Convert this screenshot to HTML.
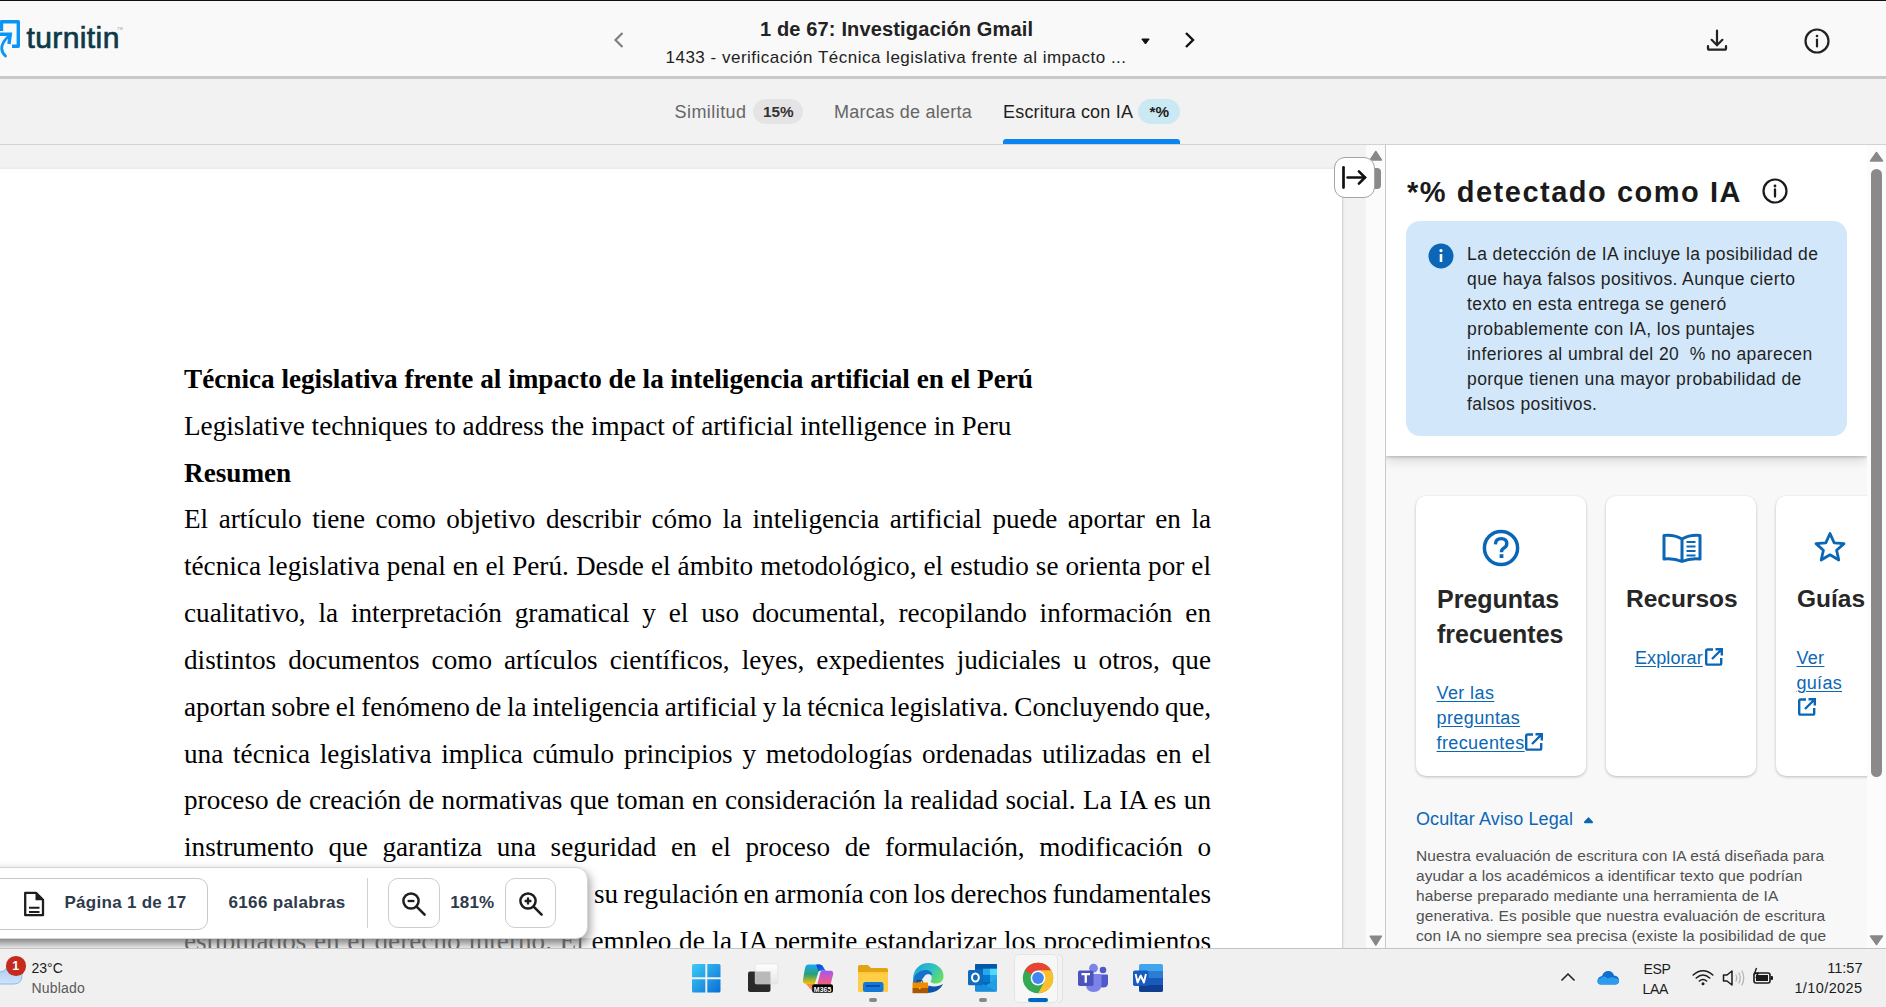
<!DOCTYPE html>
<html><head><meta charset="utf-8">
<style>
*{box-sizing:border-box;margin:0;padding:0}
html,body{width:1886px;height:1007px;overflow:hidden;background:#f2f2f2;font-family:"Liberation Sans",sans-serif;color:#222}
.a{position:absolute}
.nw{white-space:nowrap}
#topline{left:0;top:0;width:1886px;height:1px;background:#111}
#header{left:0;top:1px;width:1886px;height:75px;background:#f9f9f9}
#hborder{left:0;top:76px;width:1886px;height:3px;background:#c9c9c9}
#tabbar{left:0;top:79px;width:1886px;height:65px;background:#f2f2f2}
#tabborder{left:0;top:144px;width:1886px;height:1px;background:#d2d2d2}
#docgray{left:0;top:145px;width:1366px;height:803px;background:#f2f2f2}
#page{left:0;top:169px;width:1342px;height:779px;background:#fff}
#pagetop{left:0;top:166px;width:1342px;height:3px;background:linear-gradient(180deg,#f2f2f2,#e9e9e9)}
#pageshadow{left:1342px;top:169px;width:3px;height:779px;background:linear-gradient(90deg,#cdcdcd,#ececec 60%,#f2f2f2)}
#dscroll{left:1366px;top:145px;width:19px;height:803px;background:#fbfbfb}
#vline{left:1385px;top:145px;width:1px;height:803px;background:#c8c8c8}
#panel{left:1386px;top:145px;width:481px;height:803px;background:#f8f8f8;overflow:hidden}
#pscroll{left:1867px;top:145px;width:19px;height:803px;background:#fcfcfc}
#taskbar{left:0;top:948px;width:1886px;height:59px;background:#f0f0f0}
#tbborder{left:0;top:948px;width:1886px;height:1px;background:#c4c4c4}
.doc{font-family:"Liberation Serif",serif;font-size:27.2px;color:#000;left:184px;width:1027px;height:47px;line-height:47px;white-space:nowrap}
.j{text-align:justify;text-align-last:justify;white-space:normal}
</style></head><body>
<div id="topline" class="a"></div>
<div id="header" class="a"></div>
<div id="hborder" class="a"></div>
<div id="tabbar" class="a"></div>
<div id="tabborder" class="a"></div>
<div id="docgray" class="a"></div>
<div id="page" class="a"></div>
<div id="pagetop" class="a"></div>
<div id="pageshadow" class="a"></div>
<div id="dscroll" class="a"></div>
<div id="vline" class="a"></div>
<div id="panel" class="a"></div>
<div id="pscroll" class="a"></div>

<!-- document text -->
<div class="a doc" style="top:355.8px;font-weight:bold">Técnica legislativa frente al impacto de la inteligencia artificial en el Perú</div>
<div class="a doc" style="top:402.65px">Legislative techniques to address the impact of artificial intelligence in Peru</div>
<div class="a doc" style="top:449.5px;font-weight:bold">Resumen</div>
<div class="a doc" style="word-spacing:3.684px;top:496.35px">El artículo tiene como objetivo describir cómo la inteligencia artificial puede aportar en la</div>
<div class="a doc" style="word-spacing:0.268px;top:543.2px">técnica legislativa penal en el Perú. Desde el ámbito metodológico, el estudio se orienta por el</div>
<div class="a doc" style="word-spacing:6.069px;top:590.05px">cualitativo, la interpretación gramatical y el uso documental, recopilando información en</div>
<div class="a doc" style="word-spacing:5.223px;top:636.9px">distintos documentos como artículos científicos, leyes, expedientes judiciales u otros, que</div>
<div class="a doc" style="word-spacing:-1.079px;top:683.75px">aportan sobre el fenómeno de la inteligencia artificial y la técnica legislativa. Concluyendo que,</div>
<div class="a doc" style="word-spacing:2.972px;top:730.6px">una técnica legislativa implica cúmulo principios y metodologías ordenadas utilizadas en el</div>
<div class="a doc" style="word-spacing:0.625px;top:777.45px">proceso de creación de normativas que toman en consideración la realidad social. La IA es un</div>
<div class="a doc" style="word-spacing:7.848px;top:824.3px">instrumento que garantiza una seguridad en el proceso de formulación, modificación o</div>
<div class="a doc" style="word-spacing:-1.48px;top:871.15px;left:594px;width:617px">su regulación en armonía con los derechos fundamentales</div>
<div class="a" style="left:0;top:900px;width:1342px;height:48px;overflow:hidden">
<div class="a doc" style="word-spacing:0.833px;top:18.0px">estipulados en el derecho interno. El empleo de la IA permite estandarizar los procedimientos</div>
</div>

<!-- header -->
<svg class="a" style="left:0;top:18px" width="24" height="42" viewBox="0 0 24 42">
 <path d="M1.5 13 V3.7 H18.3 V28.3 H12" fill="none" stroke="#0a94f5" stroke-width="3.4" stroke-linejoin="round"/>
 <path d="M9.5 17.5 C3 23 -2 31 5.5 38" fill="none" stroke="#0a94f5" stroke-width="2.8" stroke-linecap="round"/>
 <path d="M0 16.2 H10.3 L9 26" fill="none" stroke="#0a94f5" stroke-width="3.4" stroke-linejoin="miter"/>
</svg>
<div class="a nw" style="left:26.5px;top:18px;font-size:30px;line-height:40px;letter-spacing:0.4px;color:#0c3a49;-webkit-text-stroke:0.7px #0c3a49">turnitin</div>
<div class="a nw" style="left:117px;top:26px;font-size:4px;line-height:5px;color:#8aa">TM</div>

<svg class="a" style="left:612px;top:31px" width="14" height="18" viewBox="0 0 14 18"><path d="M10.5 2 L3.5 9 L10.5 16" fill="none" stroke="#808080" stroke-width="2.2"/></svg>
<div class="a nw" style="left:760px;top:19px;font-size:20px;line-height:20px;font-weight:bold;letter-spacing:0.15px;color:#222">1 de 67: Investigación Gmail</div>
<div class="a nw" style="left:665.5px;top:47.7px;font-size:17px;line-height:20px;letter-spacing:0.5px;color:#222">1433 - verificación Técnica legislativa frente al impacto ...</div>
<svg class="a" style="left:1141px;top:38px" width="9" height="7" viewBox="0 0 9 7"><path d="M0.8 1 H8.2 L4.5 6 Z" fill="#111" stroke="#111" stroke-width="1" stroke-linejoin="round"/></svg>
<svg class="a" style="left:1182px;top:31px" width="14" height="18" viewBox="0 0 14 18"><path d="M4 2 L11 9 L4 16" fill="none" stroke="#111" stroke-width="2.4"/></svg>
<svg class="a" style="left:1705px;top:28px" width="24" height="24" viewBox="0 0 24 24"><path d="M12 2.6 V16.6 M6.6 11.8 L12 17.2 L17.4 11.8" fill="none" stroke="#222" stroke-width="2.2" stroke-linecap="round"/><path d="M3 18.2 V20.2 Q3 21.6 4.4 21.6 H19.6 Q21 21.6 21 20.2 V18.2" fill="none" stroke="#222" stroke-width="2.3" stroke-linecap="round"/></svg>
<svg class="a" style="left:1803px;top:27px" width="28" height="28" viewBox="0 0 28 28"><circle cx="14" cy="14" r="11.5" fill="none" stroke="#222" stroke-width="2.2"/><circle cx="14" cy="9" r="1.3" fill="#222"/><path d="M14 12.5 V19.5" stroke="#222" stroke-width="2.2" stroke-linecap="round"/></svg>

<!-- tabs -->
<div class="a nw" style="left:674.5px;top:101.8px;font-size:18px;line-height:20px;letter-spacing:0.44px;color:#666">Similitud</div>
<div class="a" style="left:752.5px;top:98.5px;width:50px;height:25px;border-radius:12.5px;background:#e4e4e4"></div>
<div class="a nw" style="left:763px;top:102px;font-size:15.3px;line-height:20px;font-weight:bold;color:#333">15%</div>
<div class="a nw" style="left:834px;top:101.8px;font-size:18px;line-height:20px;letter-spacing:0.25px;color:#666">Marcas de alerta</div>
<div class="a nw" style="left:1003px;top:101.8px;font-size:18px;line-height:20px;letter-spacing:0.19px;color:#1e1e1e">Escritura con IA</div>
<div class="a" style="left:1137.5px;top:98.5px;width:42.5px;height:25px;border-radius:12.5px;background:#cbe9f2"></div>
<div class="a nw" style="left:1149.5px;top:102px;font-size:15.3px;line-height:20px;font-weight:bold;color:#222">*%</div>
<div class="a" style="left:1003px;top:139px;width:177px;height:5px;border-radius:3px 3px 0 0;background:#0a84f0"></div>

<!-- doc scrollbar + collapse button -->
<svg class="a" style="left:1368px;top:149px" width="15" height="13" viewBox="0 0 15 13"><path d="M2.2 11 L7.8 2.5 L13.4 11 Z" fill="#888" stroke="#888" stroke-width="1.5" stroke-linejoin="round"/></svg>
<div class="a" style="left:1373.5px;top:168px;width:7.5px;height:21px;border-radius:0 4px 4px 0;background:#8a8a8a"></div>
<svg class="a" style="left:1368px;top:933.5px" width="15" height="13" viewBox="0 0 15 13"><path d="M2.2 2.2 L7.8 11 L13.4 2.2 Z" fill="#888" stroke="#888" stroke-width="1.5" stroke-linejoin="round"/></svg>
<div class="a" style="left:1334px;top:157.3px;width:40.5px;height:40.3px;border-radius:11px;background:#fff;border:1.6px solid #a4a4a4"></div>
<svg class="a" style="left:1334px;top:157px" width="40" height="40" viewBox="0 0 40 40"><path d="M9.5 10.3 V30.6" stroke="#111" stroke-width="2.7" stroke-linecap="round"/><path d="M13.6 20.5 H30.8" stroke="#111" stroke-width="2.6" stroke-linecap="round"/><path d="M24.9 14.4 L31 20.5 L24.9 26.6" fill="none" stroke="#111" stroke-width="2.6" stroke-linecap="round"/></svg>

<!-- bottom toolbar -->
<div class="a" style="left:0;top:938px;width:598px;height:10px;background:linear-gradient(180deg,rgba(185,185,185,0.75),rgba(225,225,225,0.45));-webkit-mask-image:linear-gradient(90deg,#000 97%,transparent)"></div>
<div class="a" style="left:-20px;top:867px;width:607.5px;height:72px;border-radius:12px;background:#fff;border:1px solid #d4d4d4;box-shadow:2px 4px 10px rgba(0,0,0,0.38)"></div>
<div class="a" style="left:-20px;top:878px;width:227.8px;height:52px;border-radius:10px;border:1px solid #c9c9c9"></div>
<svg class="a" style="left:22px;top:890px" width="24" height="28" viewBox="0 0 24 28"><path d="M3.2 2.8 H14 L21 9.8 V25.2 H3.2 Z" fill="none" stroke="#1e1e1e" stroke-width="2.3" stroke-linejoin="round"/><path d="M13.5 2.8 V10.2 H21 Z" fill="#1e1e1e"/><path d="M7 17.8 H17.5 M7 22 H17.5" stroke="#1e1e1e" stroke-width="2"/></svg>
<div class="a nw" style="left:64.5px;top:891.8px;font-size:17px;line-height:22px;font-weight:bold;letter-spacing:0.28px;color:#2f3a4b">Página 1 de 17</div>
<div class="a nw" style="left:228.5px;top:891.8px;font-size:17px;line-height:22px;font-weight:bold;letter-spacing:0.35px;color:#2f3a4b">6166 palabras</div>
<div class="a" style="left:367px;top:878px;width:1.2px;height:49.6px;background:#d0d0d0"></div>
<div class="a" style="left:388.3px;top:878px;width:51.4px;height:49.6px;border-radius:10px;border:1px solid #cdcdcd"></div>
<svg class="a" style="left:400px;top:890px" width="28" height="28" viewBox="0 0 28 28"><circle cx="11" cy="11" r="7.6" fill="none" stroke="#1e1e1e" stroke-width="2.5"/><path d="M16.6 16.6 L24.6 24.6" stroke="#1e1e1e" stroke-width="2.6" stroke-linecap="round"/><path d="M7.6 11 H14.4" stroke="#1e1e1e" stroke-width="2.3"/></svg>
<div class="a nw" style="left:450.3px;top:891.8px;font-size:17px;line-height:22px;font-weight:bold;letter-spacing:0.1px;color:#2f3a4b">181%</div>
<div class="a" style="left:505.2px;top:878px;width:51.2px;height:49.6px;border-radius:10px;border:1px solid #cdcdcd"></div>
<svg class="a" style="left:517px;top:890px" width="28" height="28" viewBox="0 0 28 28"><circle cx="11" cy="11" r="7.6" fill="none" stroke="#1e1e1e" stroke-width="2.5"/><path d="M16.6 16.6 L24.6 24.6" stroke="#1e1e1e" stroke-width="2.6" stroke-linecap="round"/><path d="M7.6 11 H14.4 M11 7.6 V14.4" stroke="#1e1e1e" stroke-width="2.3"/></svg>

<!-- right panel -->
<div class="a" style="left:1386px;top:145px;width:481px;height:803px;overflow:hidden">
 <div class="a" style="left:0;top:0;width:481px;height:311px;background:#fff;box-shadow:0 1px 3px rgba(0,0,0,0.22),0 4px 12px rgba(0,0,0,0.14)"></div>
 <div class="a nw" style="left:21px;top:31.6px;font-size:29px;line-height:30px;font-weight:bold;letter-spacing:1.52px;color:#1a1a1a">*% detectado como IA</div>
 <svg class="a" style="left:375px;top:32px" width="28" height="28" viewBox="0 0 28 28"><circle cx="14" cy="14" r="11.5" fill="none" stroke="#1a1a1a" stroke-width="2.2"/><circle cx="14" cy="9" r="1.4" fill="#1a1a1a"/><path d="M14 12.5 V19.5" stroke="#1a1a1a" stroke-width="2.3" stroke-linecap="round"/></svg>
 <div class="a" style="left:20px;top:76px;width:441px;height:215px;border-radius:14px;background:#d2e7f9"></div>
 <svg class="a" style="left:42px;top:98px" width="26" height="26" viewBox="0 0 26 26"><circle cx="13" cy="13" r="12.5" fill="#0b67b5"/><circle cx="13" cy="7.6" r="1.6" fill="#fff"/><path d="M13 11 V19" stroke="#fff" stroke-width="2.6"/></svg>
 <div class="a" style="left:81px;top:96.7px;font-size:17.5px;line-height:25px;letter-spacing:0.4px;color:#1f1f1f;white-space:nowrap">La detección de IA incluye la posibilidad de<br>que haya falsos positivos. Aunque cierto<br>texto en esta entrega se generó<br>probablemente con IA, los puntajes<br>inferiores al umbral del 20&nbsp; % no aparecen<br>porque tienen una mayor probabilidad de<br>falsos positivos.</div>

 <!-- cards -->
 <div class="a" style="left:30px;top:351px;width:169.5px;height:279.5px;border-radius:10px;background:#fff;box-shadow:0 1px 3px rgba(0,0,0,0.25)"></div>
 <div class="a" style="left:220px;top:351px;width:150px;height:279.5px;border-radius:10px;background:#fff;box-shadow:0 1px 3px rgba(0,0,0,0.25)"></div>
 <div class="a" style="left:390px;top:351px;width:150px;height:279.5px;border-radius:10px;background:#fff;box-shadow:0 1px 3px rgba(0,0,0,0.25)"></div>

 <svg class="a" style="left:96px;top:384px" width="38" height="38" viewBox="0 0 38 38"><circle cx="19" cy="19" r="16.6" fill="none" stroke="#0b67b5" stroke-width="3.5"/><path d="M13.4 15.4 Q13.6 9.6 19.2 9.6 Q24.8 9.7 24.8 14.6 Q24.8 17.8 21.4 19.4 Q19.5 20.4 19.5 23.2" fill="none" stroke="#0b67b5" stroke-width="3.4"/><rect x="17.6" y="25.2" width="3.8" height="3.8" fill="#0b67b5"/></svg>
 <div class="a nw" style="left:51px;top:437px;font-size:25px;line-height:34.5px;font-weight:bold;color:#262626">Preguntas<br>frecuentes</div>
 <div class="a nw" style="left:50.5px;top:535.9px;font-size:18px;line-height:25px;letter-spacing:0.4px;color:#0b67b5;text-decoration:underline;text-underline-offset:2px">Ver las<br>preguntas<br>frecuentes</div>
 <svg class="a" style="left:138.1px;top:587px" width="20" height="20" viewBox="0 0 20 20"><path d="M9 2.5 H3.6 Q2.2 2.5 2.2 4 V16.2 Q2.2 17.6 3.6 17.6 H15.8 Q17.2 17.6 17.2 16.2 V11" fill="none" stroke="#0b67b5" stroke-width="2.4"/><path d="M8 12 L16.5 3.5 M11.5 2.2 H17.8 V8.5" fill="none" stroke="#0b67b5" stroke-width="2.4"/></svg>

 <svg class="a" style="left:275px;top:387px" width="42" height="32" viewBox="0 0 42 32"><path d="M21 7 Q13 2.5 3 3.5 V27 Q13 26 21 29.5 Q29 26 39 27 V3.5 Q29 2.5 21 7 Z M21 7 V29.5" fill="none" stroke="#0b67b5" stroke-width="3" stroke-linejoin="round"/><path d="M25.5 10 H34.5 M25.5 14.5 H34.5 M25.5 19 H34.5 M25.5 23.5 H34.5" stroke="#0b67b5" stroke-width="2"/></svg>
 <div class="a nw" style="left:240px;top:437px;width:110px;text-align:center;font-size:24.5px;line-height:34.5px;font-weight:bold;color:#262626">Recursos</div>
 <div class="a nw" style="left:249px;top:501px;font-size:18px;line-height:25px;letter-spacing:0.1px;color:#0b67b5;text-decoration:underline;text-underline-offset:2px">Explorar</div>
 <svg class="a" style="left:317.8px;top:501.8px" width="20" height="20" viewBox="0 0 20 20"><path d="M9 2.5 H3.6 Q2.2 2.5 2.2 4 V16.2 Q2.2 17.6 3.6 17.6 H15.8 Q17.2 17.6 17.2 16.2 V11" fill="none" stroke="#0b67b5" stroke-width="2.4"/><path d="M8 12 L16.5 3.5 M11.5 2.2 H17.8 V8.5" fill="none" stroke="#0b67b5" stroke-width="2.4"/></svg>

 <svg class="a" style="left:426px;top:385px" width="36" height="36" viewBox="0 0 36 36"><path d="M18 3.5 L22.2 12.8 L32 13.6 L24.6 20.2 L26.8 30 L18 24.8 L9.2 30 L11.4 20.2 L4 13.6 L13.8 12.8 Z" fill="none" stroke="#0b67b5" stroke-width="2.8" stroke-linejoin="round"/></svg>
 <div class="a nw" style="left:411px;top:437px;font-size:24.5px;line-height:34.5px;font-weight:bold;color:#262626">Guías</div>
 <div class="a nw" style="left:410.5px;top:501.3px;font-size:18px;line-height:25px;letter-spacing:0.3px;color:#0b67b5;text-decoration:underline;text-underline-offset:2px">Ver<br>guías</div>
 <svg class="a" style="left:410.8px;top:552.1px" width="20" height="20" viewBox="0 0 20 20"><path d="M9 2.5 H3.6 Q2.2 2.5 2.2 4 V16.2 Q2.2 17.6 3.6 17.6 H15.8 Q17.2 17.6 17.2 16.2 V11" fill="none" stroke="#0b67b5" stroke-width="2.4"/><path d="M8 12 L16.5 3.5 M11.5 2.2 H17.8 V8.5" fill="none" stroke="#0b67b5" stroke-width="2.4"/></svg>

 <div class="a nw" style="left:30px;top:664px;font-size:18px;line-height:20px;letter-spacing:0.12px;color:#0b67b5">Ocultar Aviso Legal</div>
 <svg class="a" style="left:197px;top:671px" width="11" height="8" viewBox="0 0 11 8"><path d="M2 6.2 L5.5 2.3 L9 6.2 Z" fill="#0b67b5" stroke="#0b67b5" stroke-width="2" stroke-linejoin="round"/></svg>
 <div class="a nw" style="left:30px;top:701.4px;font-size:15.5px;line-height:20px;letter-spacing:0.12px;color:#505050">Nuestra evaluación de escritura con IA está diseñada para<br>ayudar a los académicos a identificar texto que podrían<br>haberse preparado mediante una herramienta de IA<br>generativa. Es posible que nuestra evaluación de escritura<br>con IA no siempre sea precisa (existe la posibilidad de que</div>
</div>
<!-- panel scrollbar -->
<div class="a" style="left:1867px;top:145px;width:19px;height:803px;background:#fcfcfc"></div>
<svg class="a" style="left:1869px;top:150px" width="15" height="13" viewBox="0 0 15 13"><path d="M1.5 11 L7.5 2.5 L13.5 11 Z" fill="#888" stroke="#888" stroke-width="1.5" stroke-linejoin="round"/></svg>
<div class="a" style="left:1870.8px;top:169px;width:11.2px;height:608px;border-radius:6px;background:#8a8a8a"></div>
<svg class="a" style="left:1869px;top:934px" width="15" height="13" viewBox="0 0 15 13"><path d="M1.5 2 L7.5 10.5 L13.5 2 Z" fill="#888" stroke="#888" stroke-width="1.5" stroke-linejoin="round"/></svg>

<div id="taskbar" class="a"></div>
<div id="tbborder" class="a"></div>
<!-- weather -->
<svg class="a" style="left:0;top:960px" width="26" height="28" viewBox="0 0 26 28"><defs><linearGradient id="cl" x1="0" y1="0" x2="0" y2="1"><stop offset="0" stop-color="#a9cdf5"/><stop offset="1" stop-color="#cfe3fa"/></linearGradient></defs><path d="M-6 24 Q-8 12 4 11 Q9 3 17 8 Q22 9 22 15 Q22 24 14 24 Z" fill="url(#cl)" stroke="#8db8ec" stroke-width="1"/></svg>
<div class="a" style="left:6px;top:956px;width:19.5px;height:19.5px;border-radius:50%;background:#c42b1c"></div>
<div class="a nw" style="left:6px;top:958px;width:19.5px;text-align:center;font-size:12.5px;line-height:16px;font-weight:bold;color:#fff">1</div>
<div class="a nw" style="left:31.5px;top:958.1px;font-size:14px;line-height:20px;color:#1b1b1b">23°C</div>
<div class="a nw" style="left:31.5px;top:978.2px;font-size:14px;line-height:20px;letter-spacing:0.2px;color:#5a5a5a">Nublado</div>

<!-- taskbar icons -->
<svg class="a" style="left:691px;top:963px" width="31" height="31" viewBox="0 0 31 31"><defs><linearGradient id="wg" x1="0" y1="0" x2="1" y2="1"><stop offset="0" stop-color="#3ccbf4"/><stop offset="1" stop-color="#0a6fd6"/></linearGradient></defs><path d="M1 2.5 Q1 1 2.5 1 H14.3 V14.3 H1 Z M16.3 1 H28 Q29.5 1 29.5 2.5 V14.3 H16.3 Z M1 16.3 H14.3 V29.5 H2.5 Q1 29.5 1 28 Z M16.3 16.3 H29.5 V28 Q29.5 29.5 28 29.5 H16.3 Z" fill="url(#wg)"/></svg>
<svg class="a" style="left:747px;top:963px" width="32" height="30" viewBox="0 0 32 30"><defs><linearGradient id="tv1" x1="0" y1="0" x2="0" y2="1"><stop offset="0" stop-color="#ffffff"/><stop offset="1" stop-color="#e6e6e6"/></linearGradient></defs><rect x="1" y="8.5" width="22.5" height="20.5" rx="2" fill="#2a2a2a"/><rect x="8.2" y="1" width="22.5" height="20" rx="1.5" fill="url(#tv1)" stroke="#dedede" stroke-width="0.6"/><rect x="8.2" y="8.5" width="15.3" height="12.5" fill="#b9b9b9"/></svg>
<svg class="a" style="left:802px;top:963px" width="34" height="32" viewBox="0 0 34 32"><defs><linearGradient id="cp1" x1="0" y1="0" x2="0" y2="1"><stop offset="0" stop-color="#17a9f6"/><stop offset="0.5" stop-color="#2b9e7a"/><stop offset="1" stop-color="#f4c400"/></linearGradient><linearGradient id="cp2" x1="0" y1="0" x2="0" y2="1"><stop offset="0" stop-color="#a655f2"/><stop offset="1" stop-color="#f85d78"/></linearGradient><linearGradient id="cp3" x1="0" y1="0" x2="1" y2="1"><stop offset="0" stop-color="#0a3fd0"/><stop offset="1" stop-color="#1f7be8"/></linearGradient></defs><path d="M4 21 H11.5 L9.8 27.5 Z" fill="#f98a4a"/><path d="M6.5 1.6 Q4 1.6 3 5 L1 16.5 Q0.5 21 4.5 21 H12.7 L16.5 8.8 Q17.2 7.6 18.5 7.6 H24.3 Q22.6 7.2 21.5 4.5 Q20.4 1.6 17.8 1.6 Z" fill="url(#cp1)"/><path d="M14.2 1.6 H17.8 Q20.4 1.6 21.5 4.5 Q22.6 7.2 24.3 7.6 H18.5 Q17.2 7.6 16.5 8.8 Z" fill="url(#cp3)"/><path d="M19.8 7.8 H28.8 Q31.6 7.8 31.1 11.5 L28.6 21.2 H15.4 L18.3 9.6 Q18.8 7.8 19.8 7.8 Z" fill="url(#cp2)"/><rect x="10.2" y="21.3" width="20.8" height="8.5" rx="2" fill="#000"/><text x="20.6" y="28.5" font-family="Liberation Sans" font-size="8" font-weight="bold" fill="#fff" text-anchor="middle" textLength="17.5" lengthAdjust="spacingAndGlyphs">M365</text></svg>
<svg class="a" style="left:857px;top:964px" width="32" height="29" viewBox="0 0 32 29"><path d="M1 2.5 Q1 1 2.5 1 H11 L14 4 H29.5 Q31 4 31 5.5 V10 H1 Z" fill="#e3a413"/><path d="M1 8 H31 V26.5 Q31 28 29.5 28 H2.5 Q1 28 1 26.5 Z" fill="#fcc83d"/><path d="M13 10 H31 V26.5 Q31 28 29.5 28 H2.5 Q1 28 1 26.5 V10 Z" fill="#ffd456" opacity="0.5"/><rect x="6" y="18" width="20.5" height="10" rx="2.5" fill="#1378d8"/><rect x="9" y="21" width="14" height="1.8" fill="#0b4c99"/></svg>
<div class="a" style="left:869px;top:997.8px;width:8px;height:4.2px;border-radius:2px;background:#888"></div>
<svg class="a" style="left:911px;top:962px" width="34" height="32" viewBox="0 0 34 32"><defs><linearGradient id="eg1" x1="0" y1="0" x2="1" y2="0.6"><stop offset="0" stop-color="#1a9be0"/><stop offset="0.55" stop-color="#2ec0c8"/><stop offset="1" stop-color="#62dc6a"/></linearGradient></defs><path d="M2 18 C2 7 9 1 17.5 1 C26 1 32.5 7 32.5 14 C32.5 19 29 21.5 24.5 21.5 C21 21.5 19 20.2 19.5 18 C21 15 19 11.5 15 11.5 C9 11.5 4 15 2 18 Z" fill="url(#eg1)"/><path d="M2 19 C3 12 9 8 14.5 8 C18.5 8 21 10 21.5 13 C18 11.5 12.5 13 10 20 L9 27 H2 Z" fill="#1572cc"/><circle cx="17" cy="16" r="3.7" fill="#f0f0f0"/><path d="M16 31 C24 31 30 27 32 22 C28 24.8 22 25 17.5 23.5 Z" fill="#0d52a8"/><rect x="1.5" y="20.5" width="15.5" height="5.5" fill="#f08c00"/><rect x="1.5" y="26" width="15.5" height="5.2" fill="#a85800"/><path d="M6 20.5 V19.3 Q6 18.6 6.8 18.6 H10.8 Q11.6 18.6 11.6 19.3 V20.5" fill="none" stroke="#3a2a10" stroke-width="1"/><circle cx="8.8" cy="26.3" r="0.9" fill="#ffd400"/></svg>
<svg class="a" style="left:966px;top:963px" width="33" height="31" viewBox="0 0 33 31"><rect x="9" y="1" width="22" height="27.6" rx="1.5" fill="#0a64b5"/><rect x="9" y="1" width="22" height="4.8" rx="1" fill="#0358a7"/><rect x="24" y="5.7" width="7" height="6.4" fill="#50d9ff"/><rect x="17" y="5.7" width="7" height="6.4" fill="#28a8ea"/><rect x="24" y="12" width="7" height="7" fill="#28a8ea"/><rect x="17" y="12" width="7" height="7" fill="#0078d4"/><path d="M9 15.5 L20 22.5 L31 15.5 V27.1 Q31 28.6 29.5 28.6 H10.5 Q9 28.6 9 27.1 Z" fill="#1490df"/><path d="M31 15.5 V28.6 L20 22.5 Z" fill="#28a8ea" opacity="0.6"/><rect x="2" y="7" width="15" height="15.2" rx="1.5" fill="#0f6cbd"/><ellipse cx="9.4" cy="14.6" rx="3.4" ry="4" fill="none" stroke="#fff" stroke-width="2"/></svg>
<div class="a" style="left:978.7px;top:997.6px;width:8.2px;height:4.4px;border-radius:2px;background:#888"></div>
<div class="a" style="left:1058px;top:953.5px;width:5px;height:49px;border-radius:0 5px 5px 0;background:#f3f3f3;border:1px solid #e0e0e0;border-left:none"></div>
<div class="a" style="left:1013.5px;top:953.5px;width:44px;height:49px;border-radius:5px;background:#f7f7f7;border:1px solid #e4e4e4"></div>
<svg class="a" style="left:1022px;top:962px" width="32" height="32" viewBox="0 0 32 32"><circle cx="16" cy="16" r="15.2" fill="#34a853"/><path d="M16 0.8 A15.2 15.2 0 0 1 29.2 8.4 H16 Z M16 8.4 H29.2 A15.2 15.2 0 0 1 16.5 31.2 L22.6 19.8 Z" fill="#fbbc04"/><path d="M2.8 8.4 A15.2 15.2 0 0 1 29.2 8.4 H16 A7.6 7.6 0 0 0 9.4 12.2 Z" fill="#ea4335"/><path d="M16 8.4 H29.2 A15.2 15.2 0 0 1 16.2 31.2 L22.6 19.8 A7.6 7.6 0 0 0 16 8.4 Z" fill="#fbc02d"/><circle cx="16" cy="16" r="7.4" fill="#fff"/><circle cx="16" cy="16" r="5.9" fill="#4285f4"/></svg>
<div class="a" style="left:1028px;top:998px;width:19.7px;height:3.7px;border-radius:2px;background:#0067c0"></div>
<svg class="a" style="left:1077px;top:963px" width="32" height="30" viewBox="0 0 32 30"><circle cx="16.5" cy="5.2" r="4.4" fill="#7b83eb"/><circle cx="26" cy="7" r="3.3" fill="#5059c9"/><path d="M21.5 11.5 H30 Q31 11.5 31 12.5 V20 Q31 24.5 26 24.5 Q21.5 24.5 21.5 20 Z" fill="#5059c9"/><path d="M9 11 H23.5 Q24.5 11 24.5 12 V21 Q24.5 29 16.5 29 Q9 29 9 21 Z" fill="#7b83eb"/><rect x="1" y="7.5" width="15.5" height="15.5" rx="1.8" fill="#4b53bc"/><path d="M4.5 11.2 H13 M8.75 11.2 V19.8" stroke="#fff" stroke-width="2.3"/></svg>
<svg class="a" style="left:1132px;top:963px" width="32" height="30" viewBox="0 0 32 30"><rect x="7" y="1" width="24" height="28" rx="1.8" fill="#41a5ee"/><rect x="7" y="8" width="24" height="7" fill="#2b7cd3"/><rect x="7" y="15" width="24" height="7" fill="#185abd"/><path d="M7 22 H31 V27.2 Q31 29 29.2 29 H8.8 Q7 29 7 27.2 Z" fill="#103f91"/><rect x="1" y="7.5" width="15.5" height="15.5" rx="1.8" fill="#185abd"/><path d="M3.6 11 L5.6 19.5 L8.75 12.5 L11.9 19.5 L13.9 11" fill="none" stroke="#fff" stroke-width="1.9" stroke-linejoin="round"/></svg>

<!-- tray -->
<svg class="a" style="left:1558px;top:970px" width="20" height="14" viewBox="0 0 20 14"><path d="M3.5 10.5 L10 4 L16.5 10.5" fill="none" stroke="#1b1b1b" stroke-width="1.5"/></svg>
<svg class="a" style="left:1596px;top:969px" width="24" height="17" viewBox="0 0 24 17"><path d="M6 7 Q8 1.5 13 2 Q17 2.5 18 6.5 Q23 7 23 11.5 Q23 15.5 19 15.5 H5 Q1.5 15.5 1.5 12 Q1.5 8 6 7 Z" fill="#0f6fd0"/><path d="M1.5 12 Q1.5 9.5 5 9 Q8 6 12 9.5 Q15 7.5 19 9 Q23 9.5 23 12 Q23 15.5 19 15.5 H5 Q1.5 15.5 1.5 12 Z" fill="#2c9cef"/></svg>
<div class="a nw" style="left:1643.5px;top:959px;font-size:14px;line-height:20px;letter-spacing:-0.3px;color:#1b1b1b">ESP</div>
<div class="a nw" style="left:1642.5px;top:979px;font-size:14px;line-height:20px;letter-spacing:-0.3px;color:#1b1b1b">LAA</div>
<svg class="a" style="left:1691px;top:968px" width="24" height="18" viewBox="0 0 24 18"><path d="M2.2 7 Q12 -1.5 21.8 7 M5.3 10 Q12 4 18.7 10 M8.4 13 Q12 10 15.6 13" fill="none" stroke="#1b1b1b" stroke-width="1.6" stroke-linecap="round"/><circle cx="12" cy="15.8" r="1.5" fill="#1b1b1b"/></svg>
<svg class="a" style="left:1721px;top:968px" width="25" height="20" viewBox="0 0 25 20"><path d="M2.5 7 H6 L11 3 V17 L6 13 H2.5 Z" fill="none" stroke="#1b1b1b" stroke-width="1.5" stroke-linejoin="round"/><path d="M15 7 Q16.5 10 15 13 M18 5 Q20.5 10 18 15 M21 3 Q24.5 10 21 17" fill="none" stroke="#b5b5b5" stroke-width="1.3" stroke-linecap="round"/></svg>
<svg class="a" style="left:1752px;top:967px" width="23" height="18" viewBox="0 0 23 18"><rect x="2" y="6" width="16" height="10" rx="2" fill="none" stroke="#1b1b1b" stroke-width="1.6"/><rect x="4" y="8" width="12" height="6" fill="#1b1b1b"/><rect x="18.5" y="9" width="2.5" height="4" rx="1" fill="#1b1b1b"/><path d="M4.5 1 L2.5 6.5 H6 L4 11" fill="none" stroke="#1b1b1b" stroke-width="1.4"/></svg>
<div class="a nw" style="left:1800px;top:957.7px;width:62.5px;text-align:right;font-size:14.5px;line-height:20px;color:#1b1b1b">11:57</div>
<div class="a nw" style="left:1780px;top:977.8px;width:82.5px;text-align:right;font-size:14.5px;line-height:20px;letter-spacing:0.4px;color:#1b1b1b">1/10/2025</div>
</body></html>
